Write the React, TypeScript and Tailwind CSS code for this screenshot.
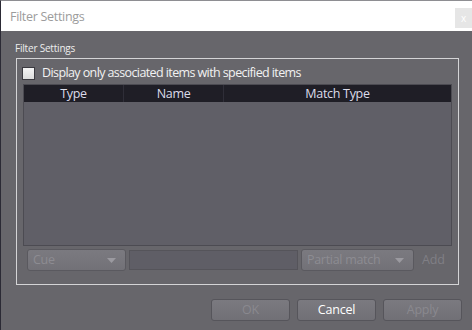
function Caret() {
  return (
    <svg width="9" height="5" viewBox="0 0 9 5" className="shrink-0">
      <path d="M0 0 H9 L4.5 5 Z" fill="#9b9aa0" />
    </svg>
  )
}

function Combo({ label, width }: { label: string; width: string }) {
  return (
    <div
      className={`${width} h-[22px] flex items-center justify-between pl-[5px] pr-[9px] rounded-[3px] border border-[#5a595f] bg-gradient-to-b from-[#7b7a80] to-[#727177] text-[12.5px] tracking-[-0.3px] text-[#8d8c92]`}
    >
      <span>{label}</span>
      <Caret />
    </div>
  )
}

function DlgButton({ label, active }: { label: string; active?: boolean }) {
  return (
    <div
      className={`w-[79px] h-[22px] flex items-center justify-center rounded-[3px] border border-[#56555b] bg-gradient-to-b from-[#7b7a80] to-[#717076] text-[12.5px] tracking-[-0.2px] ${
        active ? 'text-white' : 'text-[#8a898f]'
      }`}
    >
      {label}
    </div>
  )
}

export default function App() {
  return (
    <div
      className="w-[472px] h-[330px] flex flex-col overflow-hidden bg-[#67666b] border-l border-l-[#2b2a35] border-t border-t-[#8e8e92]"
      style={{ fontFamily: '"Open Sans", "Noto Sans", sans-serif' }}
    >
      {/* title bar */}
      <div className="h-[30px] bg-white flex items-start justify-between pl-[9px]">
        <span className="mt-[7px] text-[12.5px] tracking-[-0.3px] text-[#9c9c9c]">Filter Settings</span>
        <div className="mt-[7px] w-[17px] h-[20px] bg-[#e6e6e6] flex items-center justify-center text-[10px] text-white">
          x
        </div>
      </div>

      {/* body */}
      <div className="flex-1 flex flex-col px-[14px] pt-[11px]">
        <div className="text-[10px] leading-[13px] tracking-[-0.2px] text-[#eeeeee]">Filter Settings</div>
        <div className="mt-[3px] ml-[1px] mr-[-1px] h-[227px] border border-[#d4d4d6] flex flex-col pl-[6px] pr-[6px] pt-[8px]">
          <div className="flex items-center h-[12px] -ml-[1px]">
            <div className="w-[13px] h-[13px] border border-[#3b3a40] bg-gradient-to-b from-[#f4f4f4] to-[#dcdcdc]" />
            <span className="ml-[7px] text-[12.5px] tracking-[-0.6px] text-[#f2f2f2] leading-none">
              Display only associated items with specified items
            </span>
          </div>

          <div className="mt-[5px] h-[162px] border border-[#4c4b52] bg-[#605f67] flex flex-col">
            <div className="h-[17px] bg-[#1f1e26] flex text-[12.5px] tracking-[-0.3px] text-[#dcdcea] leading-[17px]">
              <div className="w-[100px] text-center border-r border-[#2f2e38]">Type</div>
              <div className="w-[100px] text-center border-r border-[#2f2e38]">Name</div>
              <div className="flex-1 text-center">Match Type</div>
            </div>
          </div>

          <div className="mt-[3px] flex items-center pl-[4px]">
            <Combo label="Cue" width="w-[99px]" />
            <div className="ml-[3px] w-[169px] h-[20px] border border-[#55545a] bg-[#5f5e66]" />
            <div className="ml-[3px]">
              <Combo label="Partial match" width="w-[113px]" />
            </div>
            <span className="ml-[8px] text-[12.5px] tracking-[-0.2px] text-[#807f85]">Add</span>
          </div>
        </div>

        <div className="mt-[14px] flex justify-end gap-[7px] mr-[-4px]">
          <DlgButton label="OK" />
          <DlgButton label="Cancel" active />
          <DlgButton label="Apply" />
        </div>
      </div>
    </div>
  )
}
